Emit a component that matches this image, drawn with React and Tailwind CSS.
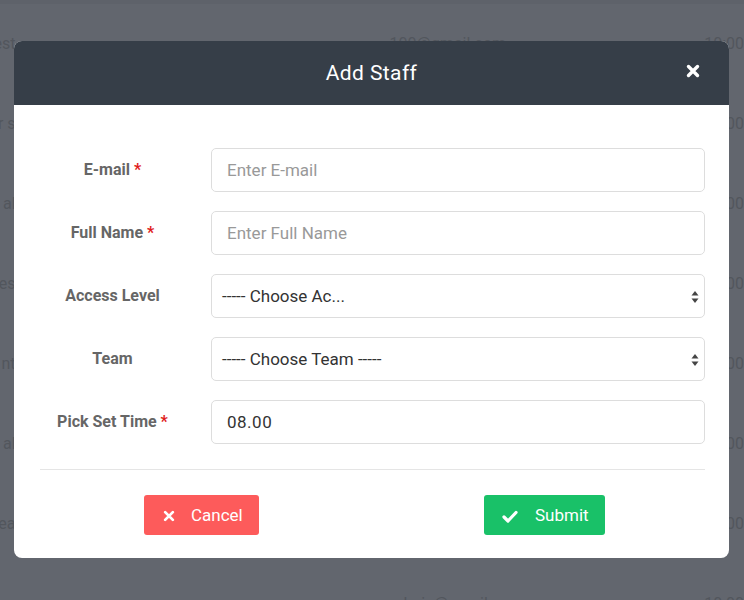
import React from "react";

const bgRows = [
  ["Guest", "100@gmail.com", "10:00"],
  ["User s", "", "10:00"],
  ["Staff al", "", "10:00"],
  ["Guest es", "", "10:00"],
  ["Agent nt", "", "10:00"],
  ["Staff al", "", "10:00"],
  ["Team ea", "", "10:00"],
  ["", "admin@gmail.com", "10:00"],
];

function Arrows() {
  return (
    <svg width="8" height="14" viewBox="0 0 8 14" className="shrink-0">
      <path d="M4 1 L7.5 5.5 H0.5 Z" fill="#444" />
      <path d="M4 13 L7.5 8.5 H0.5 Z" fill="#444" />
    </svg>
  );
}

function XIcon({ size = 14, stroke = 3.2 }) {
  return (
    <svg width={size} height={size} viewBox="0 0 14 14">
      <path d="M2.5 2.5 L11.5 11.5 M11.5 2.5 L2.5 11.5" stroke="white" strokeWidth={stroke} strokeLinecap="round" />
    </svg>
  );
}

function Row({ label, req, children }) {
  return (
    <div className="flex items-center">
      <div className="w-[145px] shrink-0 text-center text-[16px] font-bold text-[#666]">
        {label}
        {req && <span className="text-[#e01b1b]"> *</span>}
      </div>
      <div className="ml-[26px] w-[494px]">{children}</div>
    </div>
  );
}

export default function App() {
  return (
    <div
      className="relative w-[744px] h-[600px] overflow-hidden bg-[#62666e]"
      style={{ fontFamily: "Roboto, 'Liberation Sans', sans-serif" }}
    >
      <div className="h-[4px] bg-[#5e626a]" />
      <div className="flex flex-col text-[16px] text-[#52565d]">
        {bgRows.map((r, i) => (
          <div key={i} className="flex h-[80px] items-center">
            <div className="w-[16px] overflow-hidden flex justify-end whitespace-nowrap">{r[0]}</div>
            <div className="ml-[374px] w-[324px] whitespace-nowrap">{r[1]}</div>
            <div className="whitespace-nowrap">{r[2]}</div>
          </div>
        ))}
      </div>

      <div className="absolute left-[14px] top-[41px] w-[715px] h-[517px] rounded-[8px] bg-white overflow-hidden flex flex-col">
        <div className="relative h-[64px] bg-[#363e48] flex items-center justify-center pt-[2px]">
          <span className="text-white text-[21px] tracking-[0.4px]">Add Staff</span>
          <div className="absolute left-[672px] top-[23px]">
            <XIcon size={14} stroke={3.4} />
          </div>
        </div>

        <div className="pt-[43px] pl-[26px] pr-[24px] flex flex-col gap-[19px]">
          <Row label="E-mail" req>
            <div className="h-[44px] rounded-[5px] border border-[#ddd] flex items-center px-[15px] pt-[2px] text-[17px] text-[#999]">
              Enter E-mail
            </div>
          </Row>
          <Row label="Full Name" req>
            <div className="h-[44px] rounded-[5px] border border-[#ddd] flex items-center px-[15px] pt-[2px] text-[17px] text-[#999]">
              Enter Full Name
            </div>
          </Row>
          <Row label="Access Level">
            <div className="h-[44px] rounded-[5px] border border-[#ddd] flex items-center justify-between pl-[10px] pr-[5px] pt-[2px] text-[17px] text-[#333]">
              <span>----- Choose Ac...</span>
              <Arrows />
            </div>
          </Row>
          <Row label="Team">
            <div className="h-[44px] rounded-[5px] border border-[#ddd] flex items-center justify-between pl-[10px] pr-[5px] pt-[2px] text-[17px] text-[#333]">
              <span>----- Choose Team -----</span>
              <Arrows />
            </div>
          </Row>
          <Row label="Pick Set Time" req>
            <div className="h-[44px] rounded-[5px] border border-[#ddd] flex items-center px-[15px] pt-[2px] text-[17px] text-[#333] tracking-[0.5px]">
              08.00
            </div>
          </Row>
        </div>

        <div className="mt-[25px] ml-[26px] mr-[24px] border-t border-[#e5e5e5]" />

        <div className="mt-[25px] flex pl-[130px]">
          <div className="w-[115px] h-[40px] rounded-[3px] bg-[#fd5b5b] flex items-center text-white text-[17px] pt-[2px]">
            <span className="ml-[19px] flex"><XIcon size={12} stroke={3.2} /></span>
            <span className="ml-[16px]">Cancel</span>
          </div>
          <div className="ml-[225px] w-[121px] h-[40px] rounded-[3px] bg-[#19c168] flex items-center text-white text-[17px] pt-[2px]">
            <svg width="16" height="13" viewBox="0 0 16 13" className="ml-[18px]">
              <path d="M2 7 L6 11 L14 2.5" stroke="white" strokeWidth="3.2" fill="none" strokeLinecap="round" strokeLinejoin="round" />
            </svg>
            <span className="ml-[17px]">Submit</span>
          </div>
        </div>
      </div>
    </div>
  );
}
